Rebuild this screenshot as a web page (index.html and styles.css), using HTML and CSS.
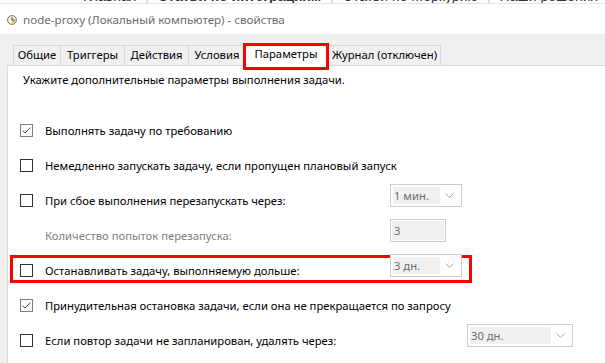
FILE: index.html
```html
<!DOCTYPE html>
<html lang="ru">
<head>
    <meta charset="UTF-8">
    <title>node-proxy - свойства</title>
    <link rel="stylesheet" href="styles.css">
</head>
<body>
    <div class="site-nav">
        <div class="site-nav-text">
            <span>Главная</span><span class="sep">|</span><b>Статьи по интеграциям</b><span class="sep">|</span><span>Статьи по Меркурию</span><span class="sep">|</span><span>Наши решения</span>
        </div>
    </div>

    <div class="titlebar">
        <svg class="clock" width="10" height="10" viewBox="0 0 10 10">
            <circle cx="5" cy="5" r="4.4" fill="#fbf6e6" stroke="#6f6f6f" stroke-width="1"/>
            <path d="M5 5 L9 5 A4 4 0 0 1 5 9 Z" fill="#f0c04a"/>
            <path d="M5 2 L5 5 L7.5 5" fill="none" stroke="#3c3c3c" stroke-width="1"/>
        </svg>
        <span class="title">node-proxy (Локальный компьютер) - свойства</span>
    </div>

    <div class="tabs">
        <div class="tab">Общие</div>
        <div class="tab">Триггеры</div>
        <div class="tab">Действия</div>
        <div class="tab">Условия</div>
        <div class="tab active">Параметры</div>
        <div class="tab last">Журнал (отключен)</div>
    </div>

    <div class="panel">
        <p class="intro">Укажите дополнительные параметры выполнения задачи.</p>

        <div class="rows">
            <div class="row">
                <span class="check on"><svg width="11" height="11" viewBox="0 0 11 11"><path d="M1.5 5.5 L4 8 L9.5 2.5" fill="none" stroke="#555" stroke-width="1"/></svg></span>
                <span class="label">Выполнять задачу по требованию</span>
            </div>
            <div class="row">
                <span class="check"></span>
                <span class="label">Немедленно запускать задачу, если пропущен плановый запуск</span>
            </div>
            <div class="row">
                <span class="check"></span>
                <span class="label">При сбое выполнения перезапускать через:</span>
                <div class="select"><span class="value">1 мин.</span><span class="arrow"><svg width="9" height="5" viewBox="0 0 9 5"><path d="M0.5 0.5 L4.5 4.5 L8.5 0.5" fill="none" stroke="#a6a6a6" stroke-width="1"/></svg></span></div>
            </div>
            <div class="row">
                <span></span>
                <span class="label disabled">Количество попыток перезапуска:</span>
                <div class="field"><span class="value">3</span></div>
            </div>
            <div class="row">
                <span class="mark"></span>
                <span class="check"></span>
                <span class="label">Останавливать задачу, выполняемую дольше:</span>
                <div class="select"><span class="value">3 дн.</span><span class="arrow"><svg width="9" height="5" viewBox="0 0 9 5"><path d="M0.5 0.5 L4.5 4.5 L8.5 0.5" fill="none" stroke="#a6a6a6" stroke-width="1"/></svg></span></div>
            </div>
            <div class="row">
                <span class="check on"><svg width="11" height="11" viewBox="0 0 11 11"><path d="M1.5 5.5 L4 8 L9.5 2.5" fill="none" stroke="#555" stroke-width="1"/></svg></span>
                <span class="label">Принудительная остановка задачи, если она не прекращается по запросу</span>
            </div>
            <div class="row wide">
                <span class="check"></span>
                <span class="label">Если повтор задачи не запланирован, удалять через:</span>
                <div class="select long"><span class="value">30 дн.</span><span class="arrow"><svg width="9" height="5" viewBox="0 0 9 5"><path d="M0.5 0.5 L4.5 4.5 L8.5 0.5" fill="none" stroke="#a6a6a6" stroke-width="1"/></svg></span></div>
            </div>
        </div>
    </div>
</body>
</html>
```

FILE: styles.css
```css
* {
    box-sizing: border-box;
}

html, body {
    margin: 0;
    height: 100%;
}

body {
    display: flex;
    flex-direction: column;
    overflow: hidden;
    background-color: #f0f0f0;
    color: #000;
    font-family: "Segoe UI", "Noto Sans", sans-serif;
    font-size: 11.25px;
}

/* browser page behind the dialog, only the bottom of its menu shows */
.site-nav {
    flex: none;
    height: 4px;
    overflow: hidden;
    background: #fff;
    border-bottom: 1px solid #e4e4e4;
}

.site-nav-text {
    display: flex;
    margin-top: -12px;
    padding-left: 83px;
    color: #333;
    font: 14px/16px "Liberation Sans", Arial, sans-serif;
    white-space: nowrap;
}

.site-nav-text .sep {
    margin: 0 9px;
    color: #c8c8c8;
}

.titlebar {
    flex: none;
    display: flex;
    align-items: center;
    height: 30px;
    padding-left: 7px;
    background: #fff;
}

.clock {
    margin-right: 6px;
    margin-top: 2px;
}

.title {
    color: #6b6b6b;
    font-size: 11.6px;
}

.tabs {
    flex: none;
    display: flex;
    align-items: flex-end;
    height: 20px;
    margin-top: 11px;
    padding-left: 13px;
}

.tab {
    height: 20px;
    border: 1px solid #d9d9d9;
    border-right: none;
    border-bottom: none;
    background: #f0f0f0;
    line-height: 18px;
    text-align: center;
    white-space: nowrap;
}

.tab:nth-child(1) { width: 47px; }
.tab:nth-child(2) { width: 64px; }
.tab:nth-child(3) { width: 64px; }
.tab:nth-child(4) { width: 57px; }

.tab.active {
    position: relative;
    z-index: 2;
    width: 82px;
    height: 23px;
    margin-bottom: -1px;
    border-right: 1px solid #d9d9d9;
    background: #fff;
    line-height: 20px;
}

/* red marker around the selected tab */
.tab.active::after {
    content: "";
    position: absolute;
    left: -3px;
    right: -3px;
    top: -1px;
    bottom: -4px;
    border: 3px solid #ff0000;
}

.tab.last {
    width: 114px;
    border-left: none;
    border-right: 1px solid #d9d9d9;
    padding-left: 2px;
}

.panel {
    flex: 1;
    margin-left: 7px;
    padding-left: 12px;
    background: #fff;
    border-top: 1px solid #d9d9d9;
    border-left: 1px solid #d9d9d9;
}

.intro {
    margin: 6px 0 0 3px;
    line-height: 16px;
}

.rows {
    margin-top: 25px;
}

.row {
    position: relative;
    display: grid;
    grid-template-columns: 25px 345px auto;
    align-items: center;
    height: 35px;
}

.row.wide {
    grid-template-columns: 25px 422px auto;
}

.check {
    width: 13px;
    height: 13px;
    border: 1px solid #333;
    background: #fff;
}

.check.on {
    border-color: #7d7d7d;
}

.check svg {
    display: block;
}

.label {
    white-space: nowrap;
    line-height: 16px;
}

.label.disabled {
    grid-column: 2;
    color: #808080;
}

.select, .field {
    position: relative;
    z-index: 1;
    display: flex;
    height: 23px;
    margin-bottom: 10px;
    padding: 2px;
    border: 1px solid #cccccc;
    background: #fff;
    color: #6d6d6d;
}

.select {
    width: 72px;
}

.select.long {
    width: 106px;
}

.field {
    width: 56px;
    padding: 1px;
}

.value {
    flex: 1;
    padding-left: 1px;
    background: #f0f0f0;
    line-height: 17px;
}

.field .value {
    line-height: 19px;
    padding-left: 2px;
}

.arrow {
    display: flex;
    align-items: center;
    justify-content: center;
    width: 19px;
}

/* red marker around the timeout row */
.mark {
    position: absolute;
    left: -10px;
    top: 2px;
    width: 462px;
    height: 28px;
    border: 3px solid #ff0000;
}
```
